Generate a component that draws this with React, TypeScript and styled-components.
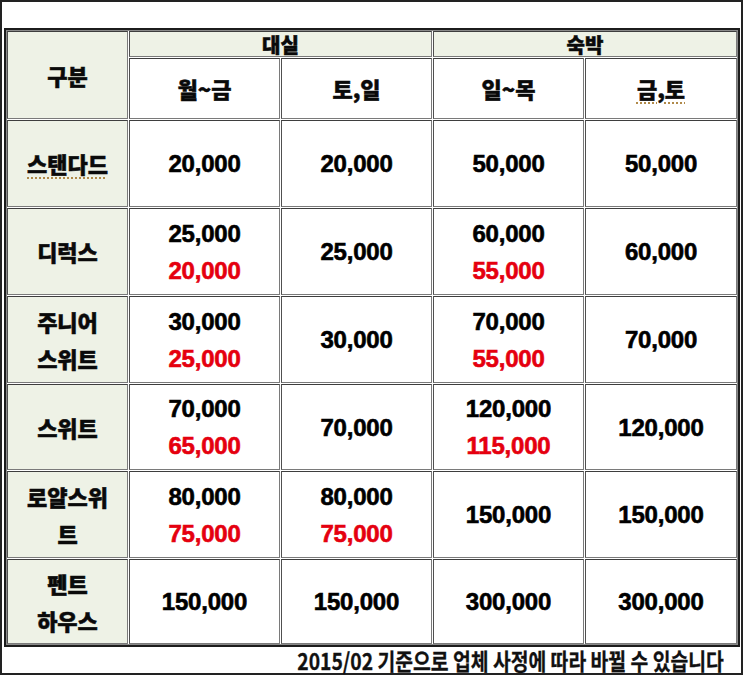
import React from "react";
import styled, { createGlobalStyle } from "styled-components";

const Global = createGlobalStyle`
  html, body { margin: 0; padding: 0; background: #fff; }
  body { font-family: "Noto Sans CJK KR", "Noto Sans", sans-serif; }
`;

const Frame = styled.div`
  width: 743px;
  height: 675px;
  box-sizing: border-box;
  border: 2px solid #222;
  padding: 26px 0 0 2px;
  display: flex;
  flex-direction: column;
  background: #fff;
`;

const Table = styled.div`
  display: grid;
  grid-template-columns: 121px 151px 151px 151px 152px;
  grid-template-rows: 26px 61px 87px 87px 87px 86px 87px 85px;
  gap: 1px;
  width: max-content;
  padding: 1px;
  border: 2px solid #1c1c1c;
  box-shadow: inset 0 0 0 1px #8a8a8a;
  background: #fff;
`;

const Cell = styled.div<{ $head?: boolean; $col?: string; $row?: string }>`
  grid-column: ${(p) => p.$col ?? "auto"};
  grid-row: ${(p) => p.$row ?? "auto"};
  box-sizing: border-box;
  border: 1px solid #7a7a7a;
  border-top-color: #3e3e3e;
  border-left-color: #505050;
  background: ${(p) => (p.$head ? "#eef2e6" : "#ffffff")};
  display: flex;
  flex-direction: column;
  align-items: center;
  justify-content: center;
  text-align: center;
`;

const Label = styled.span<{ $size?: number; $dotted?: boolean }>`
  font-family: "Noto Sans CJK KR", "Noto Sans", sans-serif;
  font-weight: 900;
  font-size: ${(p) => p.$size ?? 22}px;
  line-height: 37px;
  color: #0a0a0a;
  -webkit-text-stroke: 0.5px #0a0a0a;
  text-decoration: ${(p) => (p.$dotted ? "underline dotted #b08a4a" : "none")};
  text-underline-offset: 4px;
  text-decoration-thickness: 2px;
`;

const Price = styled.span<{ $red?: boolean }>`
  font-family: "Liberation Sans", Arial, sans-serif;
  font-weight: 700;
  font-size: 24px;
  line-height: 37px;
  letter-spacing: -0.2px;
  color: ${(p) => (p.$red ? "#e5000f" : "#000")};
  -webkit-text-stroke: 0.6px ${(p) => (p.$red ? "#e5000f" : "#000")};
`;

const Footer = styled.div`
  flex: 1;
  display: flex;
  justify-content: flex-end;
  align-items: center;
  padding-right: 17px;
`;

const Note = styled.span`
  display: inline-block;
  font-family: "Noto Sans CJK KR", "Noto Sans", sans-serif;
  font-weight: 700;
  font-size: 23px;
  line-height: 25px;
  color: #111;
  -webkit-text-stroke: 0.3px #111;
  transform: scaleX(0.84);
  transform-origin: right center;
  white-space: nowrap;
`;

type Val = string | [string, string];

const rows: { label: string[]; dotted?: boolean; vals: Val[] }[] = [
  { label: ["스탠다드"], dotted: true, vals: ["20,000", "20,000", "50,000", "50,000"] },
  { label: ["디럭스"], vals: [["25,000", "20,000"], "25,000", ["60,000", "55,000"], "60,000"] },
  { label: ["주니어", "스위트"], vals: [["30,000", "25,000"], "30,000", ["70,000", "55,000"], "70,000"] },
  { label: ["스위트"], vals: [["70,000", "65,000"], "70,000", ["120,000", "115,000"], "120,000"] },
  { label: ["로얄스위", "트"], vals: [["80,000", "75,000"], ["80,000", "75,000"], "150,000", "150,000"] },
  { label: ["펜트", "하우스"], vals: ["150,000", "150,000", "300,000", "300,000"] },
];

export default function App() {
  return (
    <>
      <Global />
      <Frame>
        <Table>
          <Cell $head $row="span 2">
            <Label>구분</Label>
          </Cell>
          <Cell $head $col="span 2">
            <Label $size={20}>대실</Label>
          </Cell>
          <Cell $head $col="span 2">
            <Label $size={20}>숙박</Label>
          </Cell>
          <Cell>
            <Label>월~금</Label>
          </Cell>
          <Cell>
            <Label>토,일</Label>
          </Cell>
          <Cell>
            <Label>일~목</Label>
          </Cell>
          <Cell>
            <Label $dotted>금,토</Label>
          </Cell>
          {rows.map((r) => (
            <React.Fragment key={r.label.join("")}>
              <Cell $head>
                {r.label.map((l) => (
                  <Label key={l} $dotted={r.dotted}>
                    {l}
                  </Label>
                ))}
              </Cell>
              {r.vals.map((v, i) => (
                <Cell key={i}>
                  {Array.isArray(v) ? (
                    <>
                      <Price>{v[0]}</Price>
                      <Price $red>{v[1]}</Price>
                    </>
                  ) : (
                    <Price>{v}</Price>
                  )}
                </Cell>
              ))}
            </React.Fragment>
          ))}
        </Table>
        <Footer>
          <Note>2015/02 기준으로 업체 사정에 따라 바뀔 수 있습니다</Note>
        </Footer>
      </Frame>
    </>
  );
}
